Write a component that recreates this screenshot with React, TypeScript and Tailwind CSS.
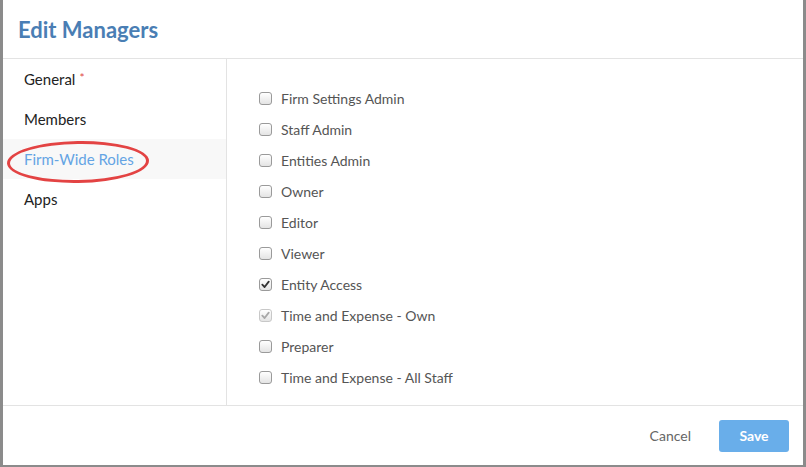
const navItems = [
    { label: "General", required: true },
    { label: "Members" },
    { label: "Firm-Wide Roles", active: true },
    { label: "Apps" },
]

const roles = [
    { label: "Firm Settings Admin" },
    { label: "Staff Admin" },
    { label: "Entities Admin" },
    { label: "Owner" },
    { label: "Editor" },
    { label: "Viewer" },
    { label: "Entity Access", checked: true },
    { label: "Time and Expense - Own", checked: true, disabled: true },
    { label: "Preparer" },
    { label: "Time and Expense - All Staff" },
]

const Box = ({ checked, disabled }: { checked?: boolean; disabled?: boolean }) => {
    return <span className={"relative w-[13px] h-[13px] rounded-[3px] border bg-gradient-to-b from-white to-[#e4e4e4] flex items-center justify-center " + (disabled ? "border-[#c8c8c8]" : "border-[#9a9a9a]")}>
        {checked && (
            <svg width="9" height="9" viewBox="0 0 10 10">
                <path d="M1.5 5.2 L4 7.8 L8.6 1.8" fill="none" stroke={disabled ? "#a8a8a8" : "#333"} strokeWidth="2" strokeLinecap="round" strokeLinejoin="round" />
            </svg>
        )}
    </span>
}

export default function App() {
    return <div className="w-[806px] h-[467px] bg-[#8b8b8b] pl-[3px] overflow-hidden" style={{ fontFamily: "Lato, 'Open Sans', sans-serif" }}>
        <div className="w-[800px] h-[465px] bg-white flex flex-col">
            <div className="h-[59px] shrink-0 border-b border-[#e3e3e3] flex items-center px-[15px]">
                <h2 className="text-[22px] font-bold text-[#4a7eb4]">Edit Managers</h2>
            </div>
            <div className="flex flex-1 min-h-0">
                <nav className="w-[224px] shrink-0 border-r border-[#e3e3e3] flex flex-col">
                    {navItems.map(item => (
                        <div key={item.label} className={"relative h-[40px] flex items-center px-[21px] text-[15px] " + (item.active ? "bg-[#f8f8f8] text-[#64a4e4]" : "text-[#222]")}>
                            {item.label}
                            {item.required && <span className="text-[#e04848] text-[12px] ml-[4px] -mt-[3px]">*</span>}
                            {item.active && <span className="absolute left-[4px] top-[2px] w-[142px] h-[42px] rounded-[50%] border-[3px] border-[#e34343] -rotate-[1deg]"></span>}
                        </div>
                    ))}
                </nav>
                <div className="flex-1 pl-[32px] pt-[24px] flex flex-col">
                    {roles.map(role => (
                        <label key={role.label} className="h-[31px] flex items-center gap-[9px] text-[14px] text-[#555]">
                            <Box checked={role.checked} disabled={role.disabled} />
                            {role.label}
                        </label>
                    ))}
                </div>
            </div>
            <div className="h-[60px] shrink-0 border-t border-[#e3e3e3] flex items-center justify-end pr-[14px] gap-[28px]">
                <button className="text-[14px] text-[#666]">Cancel</button>
                <button className="w-[70px] h-[32px] rounded-[3px] bg-[#69aeea] text-white text-[14px] font-bold">Save</button>
            </div>
        </div>
    </div>
}
